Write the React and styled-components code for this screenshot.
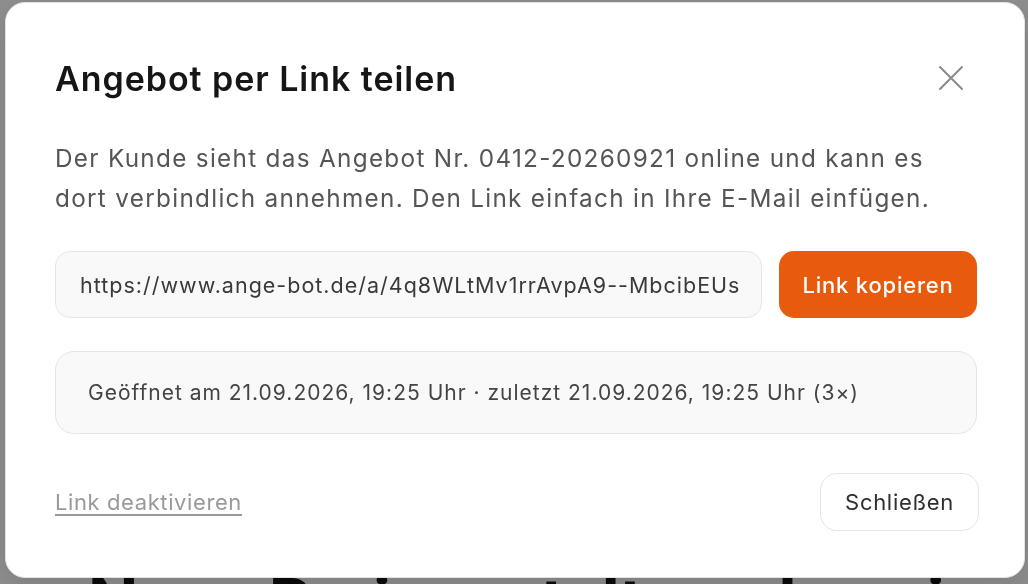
import React from 'react'
import styled, { createGlobalStyle } from 'styled-components'

const GlobalStyle = createGlobalStyle`
  html, body {
    margin: 0;
    padding: 0;
    background: #f4f4f4;
    font-family: 'Inter', 'Noto Sans', sans-serif;
    overflow: hidden;
  }
`

const Page = styled.div`
  width: 1028px;
  height: 584px;
  background: #f4f4f4;
  overflow: hidden;
  .page-title{
    margin: 0;
    padding: 562px 0 0 88px;
    font-size: 66px;
    line-height: 80px;
    font-weight: 700;
    color: #111;
    white-space: nowrap;
    letter-spacing: -1px;
  }
`

const Overlay = styled.div`
  position: fixed;
  inset: 0;
  background: rgba(0, 0, 0, 0.42);
  display: flex;
  align-items: flex-start;
  padding: 2px 3px 0 5px;
`

const Modal = styled.div`
  box-sizing: border-box;
  width: 1020px;
  height: 576px;
  background: #fff;
  border: 1px solid #e2e2e2;
  border-radius: 20px;
  padding: 50px 47px 0 49px;
  display: flex;
  flex-direction: column;
  box-shadow: 0 8px 30px rgba(0,0,0,0.12);
`

const Header = styled.div`
  display: flex;
  justify-content: space-between;
  align-items: center;
  height: 50px;
  .title{
    margin: 0;
    font-size: 34px;
    font-weight: 600;
    color: #161616;
    letter-spacing: 0.95px;
  }
`

const CloseButton = styled.button`
  border: 0;
  background: none;
  padding: 0;
  margin-right: 12px;
  width: 28px;
  height: 28px;
  color: #8a8a8a;
  cursor: pointer;
  display: flex;
  align-items: center;
  justify-content: center;
`

const Description = styled.p`
  margin: 35px 0 0;
  font-size: 24.3px;
  line-height: 40px;
  letter-spacing: 1.3px;
  color: #555;
`

const LinkRow = styled.div`
  display: flex;
  gap: 17px;
  margin-top: 33px;
  height: 67px;
`

const UrlField = styled.div`
  flex: 1;
  box-sizing: border-box;
  display: flex;
  align-items: center;
  padding: 0 24px;
  background: #f9f9f9;
  border: 1.5px solid #e6e6e6;
  border-radius: 15px;
  font-size: 21.5px;
  letter-spacing: 1px;
  color: #3a3a3a;
  white-space: nowrap;
  overflow: hidden;
`

const PrimaryButton = styled.button`
  width: 198px;
  border: 0;
  border-radius: 15px;
  background: #e85b0e;
  color: #fff;
  font-family: inherit;
  font-size: 22px;
  font-weight: 500;
  letter-spacing: 0.8px;
  cursor: pointer;
`

const InfoBox = styled.div`
  box-sizing: border-box;
  margin-top: 33px;
  height: 83px;
  display: flex;
  align-items: center;
  padding: 0 32px;
  background: #f9f9f9;
  border: 1.5px solid #e6e6e6;
  border-radius: 19px;
  font-size: 21px;
  letter-spacing: 1px;
  color: #444;
  white-space: nowrap;
`

const Footer = styled.div`
  display: flex;
  justify-content: space-between;
  align-items: center;
  margin-top: 39px;
  .deactivate{
    font-size: 22px;
    letter-spacing: 0.6px;
    color: #9a9a9a;
    text-decoration: underline;
    text-underline-offset: 4px;
    text-decoration-thickness: 1.5px;
    cursor: pointer;
  }
`

const SecondaryButton = styled.button`
  box-sizing: border-box;
  width: 159px;
  height: 58px;
  margin-right: -2px;
  border: 1.5px solid #e4e4e4;
  border-radius: 17px;
  background: #fff;
  color: #2f2f2f;
  font-family: inherit;
  font-size: 22px;
  letter-spacing: 0.7px;
  cursor: pointer;
`

export default function App() {
  return (
    <>
      <GlobalStyle />
      <Page>
        <h1 className="page-title">Neue Preisgestaltung Leasing</h1>
      </Page>
      <Overlay>
        <Modal>
          <Header>
            <h2 className="title">Angebot per Link teilen</h2>
            <CloseButton aria-label="Schließen">
              <svg width="26" height="26" viewBox="0 0 26 26" fill="none" stroke="currentColor" strokeWidth="2" strokeLinecap="round">
                <path d="M2 2 L24 24 M24 2 L2 24" />
              </svg>
            </CloseButton>
          </Header>
          <Description>
            Der Kunde sieht das Angebot Nr. 0412-20260921 online und kann es dort verbindlich annehmen. Den Link einfach in Ihre E-Mail einfügen.
          </Description>
          <LinkRow>
            <UrlField>https://www.ange-bot.de/a/4q8WLtMv1rrAvpA9--MbcibEUs</UrlField>
            <PrimaryButton>Link kopieren</PrimaryButton>
          </LinkRow>
          <InfoBox>
            Geöffnet am 21.09.2026, 19:25 Uhr · zuletzt 21.09.2026, 19:25 Uhr (3×)
          </InfoBox>
          <Footer>
            <span className="deactivate">Link deaktivieren</span>
            <SecondaryButton>Schließen</SecondaryButton>
          </Footer>
        </Modal>
      </Overlay>
    </>
  )
}
